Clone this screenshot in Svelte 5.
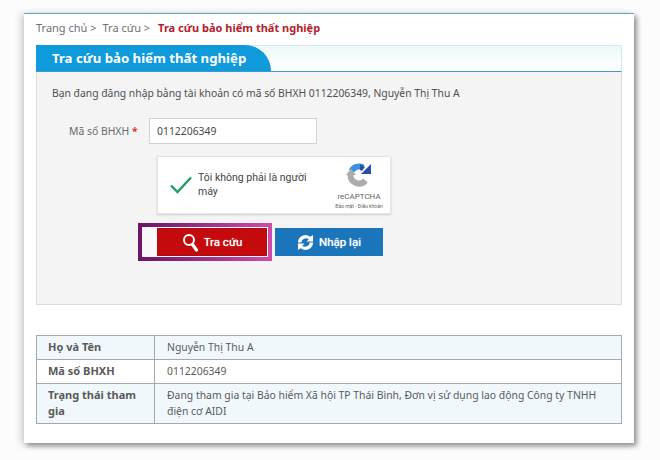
<script>
	let maSo = "0112206349";
	let hoTen = "Nguyễn Thị Thu A";

	let rows = [
		{ label: "Họ và Tên", value: hoTen, tint: true },
		{ label: "Mã số BHXH", value: maSo, tint: false },
		{
			label: "Trạng thái tham gia",
			value: "Đang tham gia tại Bảo hiểm Xã hội TP Thái Bình, Đơn vị sử dụng lao động Công ty TNHH điện cơ AIDI",
			tint: true,
		},
	];
</script>

<div class="page">
	<div class="card">
		<div class="breadcrumb">
			<span>Trang chủ &gt;</span>
			<span>Tra cứu &gt;</span>
			<b>Tra cứu bảo hiểm thất nghiệp</b>
		</div>

		<div class="head">
			<div class="tab">Tra cứu bảo hiểm thất nghiệp</div>
		</div>

		<div class="panel">
			<p class="intro">Bạn đang đăng nhập bằng tài khoản có mã số BHXH {maSo}, {hoTen}</p>

			<div class="field">
				<label for="maso">Mã số BHXH <span class="req">*</span></label>
				<input id="maso" type="text" value={maSo} />
			</div>

			<div class="captcha">
				<svg class="tick" width="24" height="20" viewBox="0 0 24 20">
					<path d="M2 10.500l6.500 6.500L22 2.500" fill="none" stroke="#1f9e63" stroke-width="2.400" />
				</svg>
				<div class="captcha-text">Tôi không phải là người máy</div>
				<div class="recaptcha">
					<svg width="26" height="26" viewBox="0 0 26 26">
						<path d="M5.500 9A8.500 8.500 0 0 1 17 5.500" fill="none" stroke="#3d8fe0" stroke-width="6" />
						<path d="M25 2v10H15z" fill="#2c4ea6" />
						<path d="M14 2.500a10 10 0 0 1 5 2.500l-3 4a5 5 0 0 0-2-1z" fill="#2c4ea6" />
						<path d="M4.500 13a8.500 8.500 0 0 0 15 5.500" fill="none" stroke="#acacac" stroke-width="6" />
						<path d="M0 13h10L5 6.500z" fill="#acacac" />
					</svg>
					<div class="rc-name">reCAPTCHA</div>
					<div class="rc-links">Bảo mật - Điều khoản</div>
				</div>
			</div>

			<div class="actions">
				<div class="highlight">
					<button type="button" class="btn red">
						<svg width="17" height="19" viewBox="0 0 17 19">
							<circle cx="7" cy="7" r="5" fill="none" stroke="#fff" stroke-width="2" />
							<path d="M10.500 11.500l4 5.500" stroke="#fff" stroke-width="3.200" stroke-linecap="round" />
						</svg>
						Tra cứu
					</button>
				</div>
				<button type="button" class="btn blue">
					<svg width="17" height="17" viewBox="0 0 18 18">
						<path d="M1 9a8 8 0 0 1 13-6l3-2v7h-7l2.500-2.500A5 5 0 0 0 4.500 9z" fill="#fff" />
						<path d="M17 9a8 8 0 0 1-13 6l-3 2v-7h7l-2.500 2.500A5 5 0 0 0 13.500 9z" fill="#fff" />
					</svg>
					Nhập lại
				</button>
			</div>
		</div>

		<table>
			<tbody>
				{#each rows as row}
					<tr class:tint={row.tint}>
						<th>{row.label}</th>
						<td>{row.value}</td>
					</tr>
				{/each}
			</tbody>
		</table>
	</div>
</div>

<style>
	:global(body) {
		background: #fcfcfc;
		font-family: "Noto Sans", "DejaVu Sans", sans-serif;
	}
	.page {
		width: 660px;
		height: 460px;
		padding: 13px 26px 0 24px;
		box-sizing: border-box;
		overflow: hidden;
	}
	.card {
		box-sizing: border-box;
		width: 610px;
		height: 430px;
		padding: 0 12px;
		background: #fff;
		border-top: 1px solid #62a5c0;
		box-shadow: 3px 3px 5px #949494, -3px 1px 7px #d0d0d0;
	}
	.breadcrumb {
		display: flex;
		gap: 6px;
		height: 31px;
		align-items: center;
		padding-bottom: 4px;
		box-sizing: border-box;
		font-size: 11px;
		color: #707070;
	}
	.breadcrumb b {
		margin-left: 2px;
		color: #b5202c;
	}
	.head {
		height: 27px;
		box-sizing: border-box;
		border: 1px solid #d5e8ee;
		border-left: 0;
		border-bottom: 1px solid #3f9bc6;
		background: linear-gradient(#eef9fc, #fff);
	}
	.tab {
		width: 235px;
		height: 26px;
		box-sizing: border-box;
		padding: 4px 0 0 16px;
		margin-top: -1px;
		background: #0e9adb;
		border-top-right-radius: 26px 26px;
		color: #fff;
		font-size: 13.200px;
		line-height: 18px;
		font-weight: bold;
	}
	.panel {
		height: 233px;
		box-sizing: border-box;
		padding: 14px 0 0 15px;
		background: #f4f4f4;
		border: 1px solid #dcdcdc;
		border-top: 0;
	}
	.intro {
		margin: 0;
		font-size: 10.350px;
		line-height: 15px;
		color: #505050;
	}
	.field {
		display: flex;
		align-items: center;
		margin-top: 17px;
	}
	label {
		width: 97px;
		padding-left: 17px;
		box-sizing: border-box;
		font-size: 10.400px;
		color: #6a6a6a;
	}
	.req {
		color: #d33;
		font-weight: bold;
	}
	input {
		width: 168px;
		height: 26px;
		box-sizing: border-box;
		padding: 0 7px;
		border: 1px solid #d2d2d2;
		background: #fff;
		font: 10.400px "Noto Sans", sans-serif;
		color: #484848;
	}
	.captcha {
		display: flex;
		align-items: center;
		width: 234px;
		height: 58px;
		box-sizing: border-box;
		margin: 12px 0 0 105px;
		padding-left: 11px;
		background: #fff;
		border: 1px solid #e4e4e4;
		box-shadow: 0 1px 2px #ccc;
	}
	.tick {
		flex: none;
		margin-right: 5px;
	}
	.captcha-text {
		width: 120px;
		font: 10.500px/14px Roboto, sans-serif;
		color: #444;
	}
	.recaptcha {
		margin-left: auto;
		padding-top: 2px;
		width: 62px;
		text-align: center;
		font-family: Roboto, sans-serif;
		color: #666;
	}
	.recaptcha svg {
		display: block;
		margin: 0 auto 4px;
	}
	.rc-name {
		font-size: 8px;
		line-height: 10px;
	}
	.rc-links {
		font-size: 5px;
		line-height: 8px;
		white-space: nowrap;
	}
	.actions {
		display: flex;
		align-items: center;
		gap: 3px;
		margin: 9px 0 0 86px;
	}
	.highlight {
		display: flex;
		box-sizing: border-box;
		width: 134px;
		height: 38px;
		padding: 1px 1px 1px 15px;
		border: 4px solid;
		border-image: linear-gradient(90deg, #6b1668, #d04aa8) 1;
		background: #f8f8f8;
	}
	.btn {
		display: flex;
		align-items: center;
		justify-content: center;
		gap: 5px;
		height: 28px;
		padding: 0;
		border: 0;
		color: #fff;
		font: 11.500px Roboto, sans-serif;
		text-shadow: 0 0 1px #fff;
	}
	.red {
		width: 110px;
		background: #c40a0c;
		box-shadow: inset 0 0 0 1px #a80f12;
	}
	.blue {
		width: 108px;
		background: #1b75bb;
	}
	table {
		width: 586px;
		margin-top: 30px;
		border-collapse: collapse;
		table-layout: fixed;
		font-size: 10.400px;
		line-height: 16px;
	}
	tr {
		background: #fff;
	}
	tr.tint {
		background: #f1f8fc;
	}
	th,
	td {
		border: 1px solid #a4a9ad;
		text-align: left;
		padding: 3px 12px 4px;
		color: #5a5a5a;
	}
	th {
		width: 94px;
		padding-left: 11px;
		padding-right: 12px;
		font-size: 11px;
		font-weight: bold;
	}
</style>
